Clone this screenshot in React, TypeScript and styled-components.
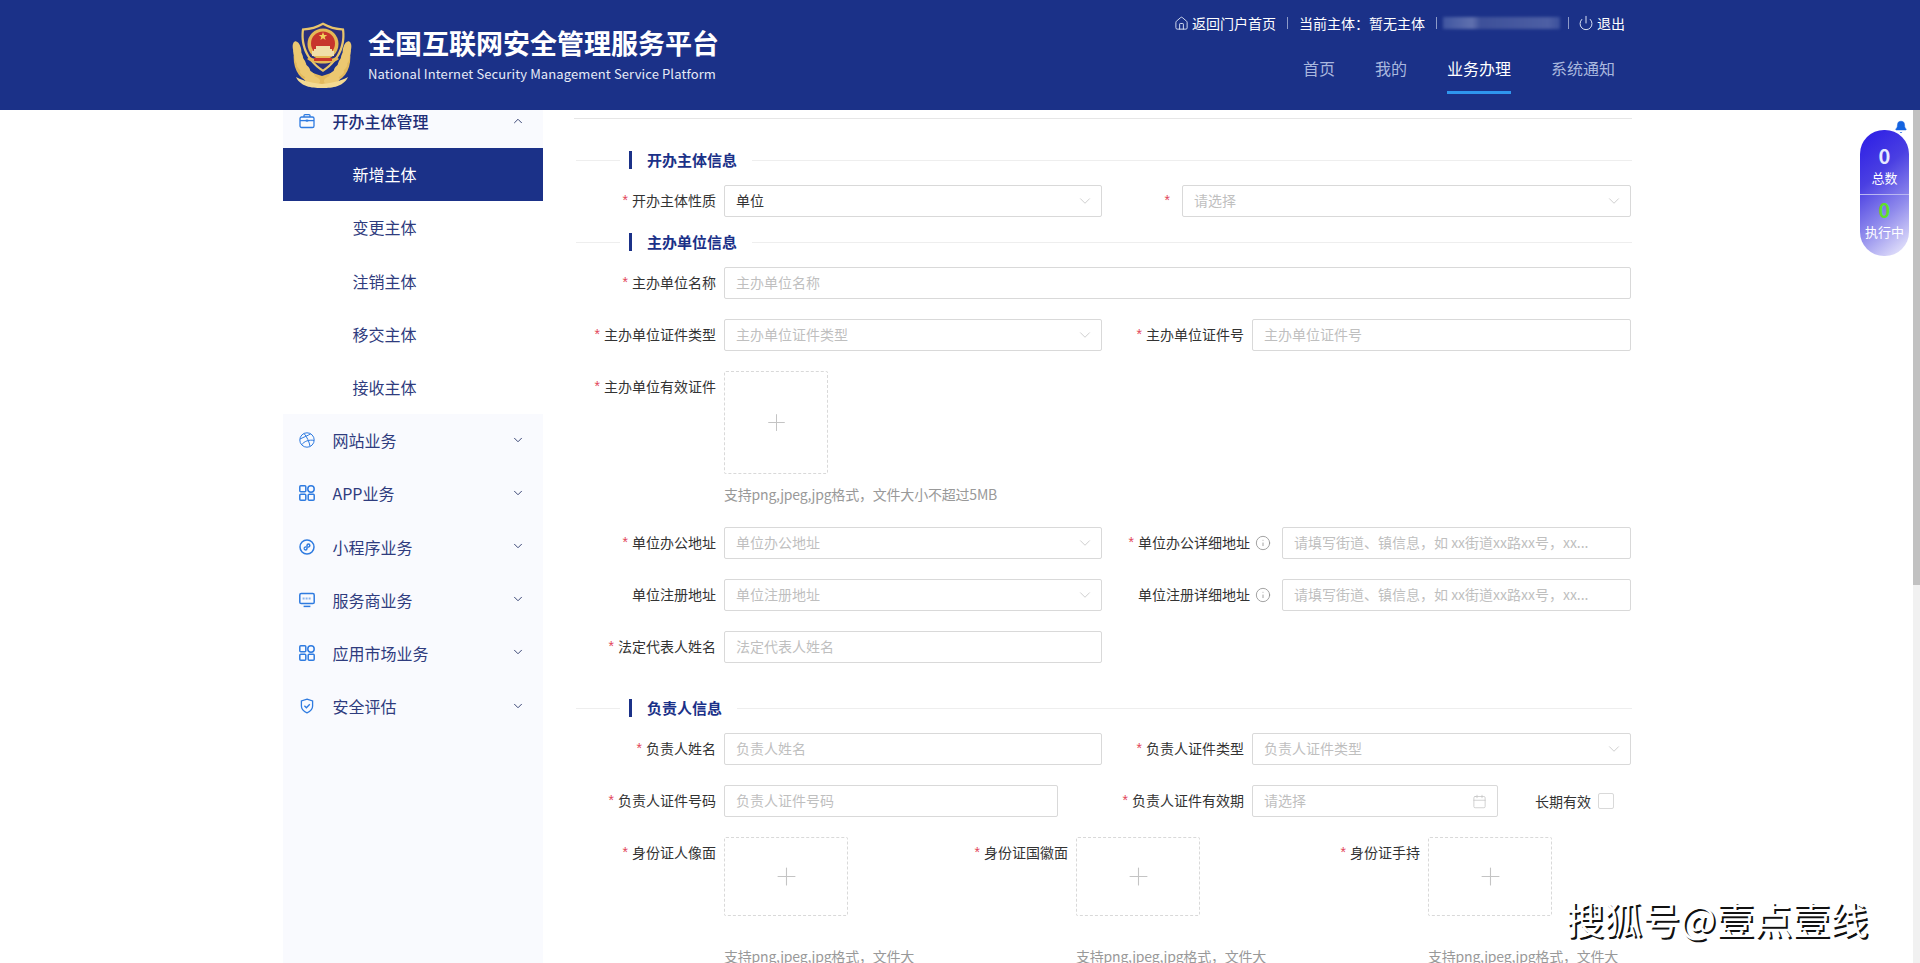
import { Bell, Calendar, ChevronDown, ChevronUp, Home, Info, Plus, Power } from "lucide-react"
import type { ReactNode } from "react"
import styled, { createGlobalStyle } from "styled-components"

const navy = "#1b3188"
const iconBlue = "#2f7be0"

const GlobalStyle = createGlobalStyle`
    * {
        box-sizing: border-box;
    }

    html, body {
        margin: 0;
        height: 100%;
        overflow: hidden;
        background: #fff;
        font-family: "Noto Sans CJK SC", "Noto Sans", sans-serif;
    }
`

function Badge() {
    const leaves = [0, 1, 2, 3, 4, 5]
    return (
        <svg width="60" height="66" viewBox="7 7 60 66">
            <path d="M9 36 C7 52 13 63 24 67 C30 70 44 70 50 67 C61 63 67 52 65 36 C62 50 52 57 37 61 C22 57 12 50 9 36 Z" fill="#e3b95c" />
            {leaves.map(i => {
                const lx = 12 + i * 0.8 + i * i * 0.45
                const rx = 62 - i * 0.8 - i * i * 0.45
                const y = 34 + i * 6.2
                return (
                    <g key={i}>
                        <ellipse cx={lx} cy={y} rx="4" ry="8" fill="#ecc871" transform={`rotate(${-14 - i * 13} ${lx} ${y})`} />
                        <ellipse cx={rx} cy={y} rx="4" ry="8" fill="#ecc871" transform={`rotate(${14 + i * 13} ${rx} ${y})`} />
                    </g>
                )
            })}
            <path d="M11 62 C20 67 30 68 37 69 C44 68 54 67 63 62 C58 73 44 73 37 73 C30 73 16 73 11 62 Z" fill="#f4da92" />
            <path d="M38 7.5 C32 11 25 13 17 13.5 C15 27 18 44 38 57 C58 44 61 27 59 13.5 C51 13 44 11 38 7.5 Z" fill="#e9c56b" />
            <path d="M38 10 C32 13.5 26 15 19 15.5 C17.5 27 21 43 38 54.5 C55 43 58.5 27 57 15.5 C50 15 44 13.5 38 10 Z" fill="#2c2f7c" />
            <circle cx="38" cy="29" r="15.5" fill="#e6b955" />
            <circle cx="38" cy="28.5" r="12" fill="#c7352c" />
            <path d="M38 17 l1.1 3 3.1 .1 -2.5 1.9 .9 3 -2.6 -1.8 -2.6 1.8 .9 -3 -2.5 -1.9 3.1 -.1 Z" fill="#f3d25c" />
            <path d="M29 34 h18 v2 h-18 Z M31 31 h14 v3 h-14 Z M27 36 h22 v5 h-22 Z" fill="#f0dfa8" />
            <path d="M22 44 C29 50 47 50 54 44 L51 42 C45 46 31 46 25 42 Z" fill="#e6b955" />
            <path d="M29 43 h18 v3 h-18 Z" fill="#c7352c" />
        </svg>
    )
}

function BriefcaseIcon() {
    return (
        <svg width="16" height="16" viewBox="0 0 16 16" fill="none" stroke={iconBlue} strokeWidth="1.3">
            <rect x="1" y="4" width="14" height="10.5" rx="1.6" />
            <path d="M5 4 V2.6 C5 2 5.4 1.6 6 1.6 H10 C10.6 1.6 11 2 11 2.6 V4" />
            <path d="M1 7.6 H15" />
            <rect x="6.8" y="6.6" width="2.4" height="2" fill={iconBlue} stroke="none" />
        </svg>
    )
}

function BallIcon() {
    return (
        <svg width="16" height="16" viewBox="0 0 16 16" fill="none" stroke={iconBlue} strokeWidth="1">
            <circle cx="8" cy="8" r="7.2" />
            <path d="M1 7 C5 5 9 3.6 11.6 1.8" />
            <path d="M5 1.4 C8 5 10.4 10 11 14.4" />
            <path d="M2.6 12.8 C5 9.4 10 7.4 15 8.4" />
        </svg>
    )
}

function AppsIcon() {
    return (
        <svg width="16" height="16" viewBox="0 0 16 16" fill="none" stroke={iconBlue} strokeWidth="1.5">
            <rect x="0.8" y="0.8" width="6" height="6" rx="1" />
            <circle cx="12" cy="4" r="3.2" />
            <rect x="0.8" y="9.2" width="6" height="6" rx="1" />
            <rect x="9.2" y="9.2" width="6" height="6" rx="1" />
        </svg>
    )
}

function MiniProgramIcon() {
    return (
        <svg width="16" height="16" viewBox="0 0 16 16" fill="none" stroke={iconBlue} strokeWidth="1.5">
            <circle cx="8" cy="8" r="7" />
            <path d="M5.2 9.6 C5.2 11.4 7.8 11.6 8 9.4 V6.6 C8.2 4.4 10.8 4.6 10.8 6.4 C10.8 7.6 9.8 8.2 9 8" />
            <path d="M7 8 C6.2 7.8 5.2 8.4 5.2 9.6" />
        </svg>
    )
}

function ScreenIcon() {
    return (
        <svg width="16" height="16" viewBox="0 0 16 16" fill="none" stroke={iconBlue} strokeWidth="1.5">
            <rect x="0.8" y="1.6" width="14.4" height="10" rx="1.4" />
            <path d="M4.6 14.4 H11.4" />
            <path d="M3.6 6.6 H12.4" strokeWidth="2" strokeDasharray="2 1" opacity="0.55" />
        </svg>
    )
}

function ShieldIcon() {
    return (
        <svg width="16" height="16" viewBox="0 0 16 16" fill="none" stroke={iconBlue} strokeWidth="1.3">
            <path d="M8 1.2 L13.6 3 V8 C13.6 11.2 11 13.6 8 14.8 C5 13.6 2.4 11.2 2.4 8 V3 Z" />
            <path d="M5.4 7.8 L7.4 9.8 L10.8 6.2" />
        </svg>
    )
}

export default function App() {
    return (
        <Page>
            <GlobalStyle />
            <Header>
                <Brand>
                    <Badge />
                    <BrandText>
                        <BrandTitle>全国互联网安全管理服务平台</BrandTitle>
                        <BrandSub>National Internet Security Management Service Platform</BrandSub>
                    </BrandText>
                </Brand>
                <HeaderRight>
                    <TopLinks>
                        <TopLink><Home size={15} strokeWidth={1.5} />返回门户首页</TopLink>
                        <TopSep />
                        <TopLink>当前主体：暂无主体</TopLink>
                        <TopSep />
                        <BlurredName />
                        <TopSep />
                        <LogoutLink><Power size={16} strokeWidth={1.5} />退出</LogoutLink>
                    </TopLinks>
                    <Nav>
                        <NavItem>首页</NavItem>
                        <NavItem>我的</NavItem>
                        <NavItem $active>业务办理</NavItem>
                        <NavItem>系统通知</NavItem>
                    </Nav>
                </HeaderRight>
            </Header>

            <Body>
                <Workspace>
                    <Sidebar>
                        <Menu>
                            <MenuRow $open>
                                <BriefcaseIcon />
                                <MenuText>开办主体管理</MenuText>
                                <ChevronUp size={14} strokeWidth={1.7} />
                            </MenuRow>
                            <SubRow $active>新增主体</SubRow>
                            <SubRow>变更主体</SubRow>
                            <SubRow>注销主体</SubRow>
                            <SubRow>移交主体</SubRow>
                            <SubRow>接收主体</SubRow>
                            <MenuRow><BallIcon /><MenuText>网站业务</MenuText><ChevronDown size={14} strokeWidth={1.7} /></MenuRow>
                            <MenuRow><AppsIcon /><MenuText>APP业务</MenuText><ChevronDown size={14} strokeWidth={1.7} /></MenuRow>
                            <MenuRow><MiniProgramIcon /><MenuText>小程序业务</MenuText><ChevronDown size={14} strokeWidth={1.7} /></MenuRow>
                            <MenuRow><ScreenIcon /><MenuText>服务商业务</MenuText><ChevronDown size={14} strokeWidth={1.7} /></MenuRow>
                            <MenuRow><AppsIcon /><MenuText>应用市场业务</MenuText><ChevronDown size={14} strokeWidth={1.7} /></MenuRow>
                            <MenuRow><ShieldIcon /><MenuText>安全评估</MenuText><ChevronDown size={14} strokeWidth={1.7} /></MenuRow>
                        </Menu>
                    </Sidebar>

                    <Main>
                        <TopRule />

                        <SectionHead $top={32} title="开办主体信息" />
                        <Row $top={16}>
                            <FieldLabel required>开办主体性质</FieldLabel>
                            <Select $width={378} value="单位" />
                            <FieldLabel required $width={72}></FieldLabel>
                            <Select placeholder="请选择" />
                        </Row>

                        <SectionHead $top={16} title="主办单位信息" />
                        <Row $top={16}>
                            <FieldLabel required>主办单位名称</FieldLabel>
                            <TextInput placeholder="主办单位名称" readOnly />
                        </Row>
                        <Row $top={20}>
                            <FieldLabel required>主办单位证件类型</FieldLabel>
                            <Select $width={378} placeholder="主办单位证件类型" />
                            <FieldLabel required>主办单位证件号</FieldLabel>
                            <TextInput placeholder="主办单位证件号" readOnly />
                        </Row>
                        <Row $top={20}>
                            <FieldLabel required>主办单位有效证件</FieldLabel>
                            <UploadColumn>
                                <UploadBox $width={104} $height={103}><Plus size={27} strokeWidth={0.9} /></UploadBox>
                                <Hint $top={10}>支持png,jpeg,jpg格式，文件大小不超过5MB</Hint>
                            </UploadColumn>
                        </Row>
                        <Row $top={23}>
                            <FieldLabel required>单位办公地址</FieldLabel>
                            <Select $width={378} placeholder="单位办公地址" />
                            <FieldLabel required $width={172} info>单位办公详细地址</FieldLabel>
                            <TextInput placeholder="请填写街道、镇信息，如 xx街道xx路xx号，xx..." readOnly />
                        </Row>
                        <Row $top={20}>
                            <FieldLabel>单位注册地址</FieldLabel>
                            <Select $width={378} placeholder="单位注册地址" />
                            <FieldLabel $width={172} info>单位注册详细地址</FieldLabel>
                            <TextInput placeholder="请填写街道、镇信息，如 xx街道xx路xx号，xx..." readOnly />
                        </Row>
                        <Row $top={20}>
                            <FieldLabel required>法定代表人姓名</FieldLabel>
                            <TextInput $width={378} placeholder="法定代表人姓名" readOnly />
                        </Row>

                        <SectionHead $top={36} title="负责人信息" />
                        <Row $top={16}>
                            <FieldLabel required>负责人姓名</FieldLabel>
                            <TextInput $width={378} placeholder="负责人姓名" readOnly />
                            <FieldLabel required>负责人证件类型</FieldLabel>
                            <Select placeholder="负责人证件类型" />
                        </Row>
                        <Row $top={20}>
                            <FieldLabel required>负责人证件号码</FieldLabel>
                            <TextInput $width={334} placeholder="负责人证件号码" readOnly />
                            <FieldLabel required $width={186}>负责人证件有效期</FieldLabel>
                            <Select $width={246} placeholder="请选择" date />
                            <LongTerm>长期有效<CheckBox /></LongTerm>
                        </Row>
                        <UploadGrid>
                            <UploadField label="身份证人像面" />
                            <UploadField label="身份证国徽面" />
                            <UploadField label="身份证手持" />
                        </UploadGrid>
                    </Main>

                    <StatPill>
                        <PillBell><Bell size={14} fill="#1463e0" strokeWidth={1} /></PillBell>
                        <StatCell>
                            <StatNumber>0</StatNumber>
                            <StatLabel>总数</StatLabel>
                        </StatCell>
                        <StatCell $divided>
                            <StatNumber $green>0</StatNumber>
                            <StatLabel>执行中</StatLabel>
                        </StatCell>
                    </StatPill>
                    <Watermark>搜狐号@壹点壹线</Watermark>
                </Workspace>
                <ScrollTrack><ScrollThumb /></ScrollTrack>
            </Body>
        </Page>
    )
}

function SectionHead({ title, $top }: { title: string; $top: number }) {
    return (
        <SectionRow $top={$top}>
            <SectionLead />
            <SectionBar />
            <SectionTitle>{title}</SectionTitle>
            <SectionLine />
        </SectionRow>
    )
}

function FieldLabel({ children, required, info, $width = 142 }: { children?: ReactNode; required?: boolean; info?: boolean; $width?: number }) {
    return (
        <Label $width={$width}>
            {required && <Star>*</Star>}
            {children}
            {info && <InfoMark><Info size={16} strokeWidth={1.2} /></InfoMark>}
        </Label>
    )
}

function Select({ value, placeholder, date, $width }: { value?: string; placeholder?: string; date?: boolean; $width?: number }) {
    return (
        <SelectBox $width={$width}>
            <SelectText $empty={!value}>{value || placeholder}</SelectText>
            {date ? <DateIcon><Calendar size={15} strokeWidth={1.1} /></DateIcon> : <ChevronDown size={18} strokeWidth={1} />}
        </SelectBox>
    )
}

function UploadField({ label }: { label: string }) {
    return (
        <UploadCell>
            <FieldLabel required>{label}</FieldLabel>
            <UploadColumn>
                <UploadBox $width={124} $height={79}><Plus size={29} strokeWidth={0.9} /></UploadBox>
                <Hint $top={30} $narrow>支持png,jpeg,jpg格式，文件大小不超过5MB</Hint>
            </UploadColumn>
        </UploadCell>
    )
}

const Page = styled.div`
    display: flex;
    flex-direction: column;
    height: 100vh;
    overflow: hidden;
`

const Header = styled.header`
    flex: none;
    display: flex;
    justify-content: space-between;
    height: 110px;
    padding: 0 295px 0 292px;
    background: ${navy};
    color: #fff;
`

const Brand = styled.div`
    display: flex;
    align-items: flex-start;
    gap: 16px;
    padding-top: 22px;
`

const BrandText = styled.div`
    display: flex;
    flex-direction: column;
`

const BrandTitle = styled.div`
    font-size: 27px;
    line-height: 34px;
    margin-top: 4px;
    font-weight: 700;
    white-space: nowrap;
`

const BrandSub = styled.div`
    font-size: 13px;
    line-height: 20px;
    margin-top: 4px;
    letter-spacing: 0.12px;
    color: #e6ebf7;
    white-space: nowrap;
`

const HeaderRight = styled.div`
    display: flex;
    flex-direction: column;
    align-items: flex-end;
`

const TopLinks = styled.div`
    display: flex;
    align-items: center;
    gap: 11px;
    height: 22px;
    margin-top: 12px;
`

const TopLink = styled.span`
    display: flex;
    align-items: center;
    gap: 3px;
    font-size: 14px;
    white-space: nowrap;

    svg {
        color: #dbe2f4;
    }
`

const LogoutLink = styled(TopLink)`
    margin-left: -2px;
`

const TopSep = styled.i`
    width: 1px;
    height: 12px;
    background: #8d9ac8;
`

const BlurredName = styled.div`
    width: 117px;
    height: 12px;
    margin: 0 -3px 0 -5px;
    background: linear-gradient(90deg, #3f55a0 0%, #5f70ae 25%, #3d5099 32%, #4d5fa4 90%, #3a4f9c 100%);
    filter: blur(1.5px);
`

const Nav = styled.nav`
    display: flex;
    gap: 40px;
    margin: 13px 10px 0 0;
`

const NavItem = styled.a<{ $active?: boolean }>`
    display: block;
    height: 47px;
    padding-top: 9px;
    font-size: 16px;
    line-height: 24px;
    color: ${p => (p.$active ? "#fff" : "#a9b7de")};
    border-bottom: 3px solid ${p => (p.$active ? "#2f96ee" : "transparent")};
`

const Body = styled.div`
    flex: 1;
    min-height: 0;
    display: flex;
`

const Workspace = styled.div`
    position: relative;
    flex: 1;
    display: flex;
    align-items: stretch;
    gap: 31px;
    padding-left: 283px;
    overflow: hidden;
`

const Sidebar = styled.aside`
    flex: none;
    width: 260px;
    background: #f9fafe;
    overflow: hidden;
`

const Menu = styled.div`
    margin-top: -15px;
`

const MenuRow = styled.div<{ $open?: boolean }>`
    display: flex;
    align-items: center;
    gap: 17.5px;
    height: 53.2px;
    padding: 0 18px 1px 16px;
    font-size: 16px;
    color: ${p => (p.$open ? "#1f2f78" : "#2f3c7e")};
    font-weight: ${p => (p.$open ? 500 : 400)};

    > svg:last-child {
        color: #3b4675;
        margin-top: -1px;
    }
`

const MenuText = styled.span`
    flex: 1;
`

const SubRow = styled.div<{ $active?: boolean }>`
    height: 53.2px;
    padding-left: 69.5px;
    font-size: 16px;
    line-height: 53.2px;
    background: ${p => (p.$active ? navy : "#fff")};
    color: ${p => (p.$active ? "#fff" : "#2f3c7e")};
`

const Main = styled.main`
    flex: none;
    width: 1058px;
    padding-top: 8px;
`

const TopRule = styled.div`
    height: 1px;
    background: #e6e6e6;
`

const SectionRow = styled.div<{ $top: number }>`
    display: flex;
    align-items: center;
    height: 18px;
    margin-top: ${p => p.$top}px;
    padding-left: 2px;
`

const SectionLead = styled.i`
    width: 44px;
    height: 1px;
    margin-right: 9px;
    background: #eeeeee;
`

const SectionBar = styled.i`
    width: 3px;
    height: 18px;
    margin-right: 15px;
    background: ${navy};
`

const SectionTitle = styled.h3`
    margin: 0 15px 0 0;
    font-size: 15px;
    line-height: 18px;
    font-weight: 700;
    color: ${navy};
`

const SectionLine = styled.i`
    flex: 1;
    height: 1px;
    background: #eeeeee;
`

const Row = styled.div<{ $top: number }>`
    display: flex;
    align-items: flex-start;
    margin-top: ${p => p.$top}px;
    padding-right: 1px;
`

const Label = styled.label<{ $width: number }>`
    flex: none;
    display: flex;
    align-items: center;
    justify-content: flex-end;
    width: ${p => p.$width}px;
    height: 32px;
    margin-right: 8px;
    padding-bottom: 2px;
    font-size: 14px;
    color: #333;
    white-space: nowrap;
`

const Star = styled.span`
    margin-right: 4px;
    color: #e2455a;
    font-family: "Liberation Sans", sans-serif;
`

const InfoMark = styled.span`
    display: flex;
    margin: 2px 3px 0 5px;
    color: #8c8c8c;
`

const TextInput = styled.input<{ $width?: number }>`
    flex: ${p => (p.$width ? "none" : "1")};
    width: ${p => (p.$width ? `${p.$width}px` : "auto")};
    min-width: 0;
    height: 32px;
    padding: 0 11px 2px;
    border: 1px solid #d9d9d9;
    border-radius: 2px;
    font: inherit;
    font-size: 14px;
    outline: none;

    &::placeholder {
        color: #bfbfbf;
    }
`

const SelectBox = styled.div<{ $width?: number }>`
    flex: ${p => (p.$width ? "none" : "1")};
    width: ${p => (p.$width ? `${p.$width}px` : "auto")};
    display: flex;
    align-items: center;
    justify-content: space-between;
    height: 32px;
    padding: 0 7px 0 11px;
    border: 1px solid #d9d9d9;
    border-radius: 2px;

    svg {
        color: #bfbfbf;
    }
`

const SelectText = styled.span<{ $empty: boolean }>`
    padding-bottom: 2px;
    font-size: 14px;
    color: ${p => (p.$empty ? "#bfbfbf" : "#333")};
`

const DateIcon = styled.span`
    display: flex;
    margin-right: 3px;
`

const UploadColumn = styled.div`
    display: flex;
    flex-direction: column;
    align-items: flex-start;
`

const UploadBox = styled.div<{ $width: number; $height: number }>`
    display: flex;
    align-items: center;
    justify-content: center;
    width: ${p => p.$width}px;
    height: ${p => p.$height}px;
    border: 1px dashed #d9d9d9;
    border-radius: 2px;
    color: #c4c4c4;
`

const Hint = styled.div<{ $top: number; $narrow?: boolean }>`
    width: ${p => (p.$narrow ? "200px" : "auto")};
    margin-top: ${p => p.$top}px;
    font-size: 14px;
    line-height: 20px;
    letter-spacing: -0.2px;
    color: #999;
`

const UploadGrid = styled.div`
    display: grid;
    grid-template-columns: repeat(3, 352px);
    margin-top: 20px;
`

const UploadCell = styled.div`
    display: flex;
    align-items: flex-start;
`

const LongTerm = styled.div`
    display: flex;
    align-items: center;
    gap: 7px;
    height: 32px;
    margin-left: 37px;
    font-size: 14px;
    color: #333;
`

const CheckBox = styled.i`
    width: 16px;
    height: 16px;
    border: 1px solid #d9d9d9;
    border-radius: 2px;
`

const StatPill = styled.div`
    position: absolute;
    top: 20px;
    right: 4px;
    width: 49px;
    height: 126px;
    border-radius: 24px;
    background: linear-gradient(140deg, #2a1be6 0%, #4a3fe2 35%, #8f8aec 65%, #f1f0fd 100%);
    color: #eef0ff;
    text-align: center;
`

const PillBell = styled.span`
    position: absolute;
    top: -10px;
    right: 1px;
    display: flex;
    color: #1463e0;
`

const StatCell = styled.div<{ $divided?: boolean }>`
    height: ${p => (p.$divided ? "62px" : "64px")};
    padding-top: ${p => (p.$divided ? "4px" : "15px")};
    border-top: ${p => (p.$divided ? "1px solid #b9b7f2" : "none")};
`

const StatNumber = styled.div<{ $green?: boolean }>`
    font-size: 20px;
    line-height: 22px;
    font-weight: 700;
    color: ${p => (p.$green ? "#5ee02a" : "#e6e9ff")};
`

const StatLabel = styled.div`
    font-size: 13px;
    line-height: 22px;
    white-space: nowrap;
    color: #fff;
`

const Watermark = styled.div`
    position: absolute;
    left: 1566px;
    top: 785px;
    font-size: 38px;
    line-height: 46px;
    color: #fff;
    text-shadow: 2px 2px 0 #111;
    white-space: nowrap;
`

const ScrollTrack = styled.div`
    flex: none;
    width: 7px;
    background: #f1f1f1;
`

const ScrollThumb = styled.div`
    height: 475px;
    background: #c1c1c1;
`
